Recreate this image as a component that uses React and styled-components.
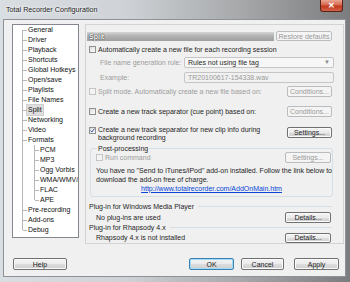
import styled, { createGlobalStyle } from "styled-components";

const GlobalStyle = createGlobalStyle`
  html, body { margin: 0; padding: 0; overflow: hidden; }
  body { font-family: "Liberation Sans", Arial, sans-serif; }
`;

const Frame = styled.div`
  width: 350px;
  height: 282px;
  box-sizing: border-box;
  display: flex;
  flex-direction: column;
  padding: 0 4px 5px 3px;
  background: linear-gradient(90deg, #d9dee3 0%, #cfd3d7 35%, #a7a9ab 68%, #7a7c7d 100%);
`;

const TitleBar = styled.div`
  height: 19px;
  display: flex;
  align-items: flex-start;
  flex-shrink: 0;
`;

const Title = styled.div`
  margin: 5px 0 0 3px;
  font-size: 7.2px;
  line-height: 9px;
  color: #1b1b1b;
  text-shadow: 0 0 4px #fff, 0 0 2px #fff;
  white-space: nowrap;
`;

const CloseBtn = styled.div`
  margin: 0 3px 0 auto;
  width: 23px;
  height: 12px;
  box-sizing: border-box;
  border: 1px solid #5b2218;
  border-top: none;
  border-radius: 0 0 3px 3px;
  background: linear-gradient(#e9a592 0%, #d5684f 45%, #c1371c 55%, #d0664a 100%);
  display: flex;
  align-items: center;
  justify-content: center;
  color: #fff;
  font-size: 8px;
  font-weight: bold;
  line-height: 1;
`;

const Client = styled.div`
  flex: 1;
  background: #f0f0f0;
  border: 1px solid #8c9298;
  padding: 4px 0 0 8px;
  display: flex;
  flex-direction: column;
  font-size: 7px;
  color: #1e1e1e;
`;

const Body = styled.div`
  display: flex;
  align-items: flex-start;
  gap: 6px;
`;

const TreeBox = styled.div`
  width: 67px;
  height: 214px;
  box-sizing: border-box;
  background: #fff;
  border: 1px solid #828790;
  overflow: hidden;
`;

const TreeList = styled.ul`
  margin: 0;
  padding: 0 0 0 ${(p) => (p.$nested ? 12 : 0)}px;
  list-style: none;
`;

const TreeItem = styled.li`
  position: relative;
  white-space: nowrap;

  &::before {
    content: "";
    position: absolute;
    left: 9px;
    top: 0;
    bottom: 0;
    border-left: 1px solid #b8b8b8;
  }
  &:first-child::before { top: ${(p) => (p.$root ? 5 : 0)}px; }
  &:last-child::before { bottom: auto; height: 5px; }
  &::after {
    content: "";
    position: absolute;
    left: 10px;
    top: 5px;
    width: 4px;
    border-top: 1px solid #b8b8b8;
  }
`;

const TreeLabel = styled.span`
  display: inline-block;
  height: 10px;
  line-height: 10px;
  margin-left: 14px;
  padding: 0 1px;
  box-sizing: border-box;
  background: ${(p) => (p.$selected ? "#dedede" : "transparent")};
  outline: ${(p) => (p.$selected ? "1px solid #cfcfcf" : "none")};
  color: #111;
`;

const Panel = styled.div`
  width: 259px;
  height: 220px;
  box-sizing: border-box;
  border: 1px solid #d3d3d3;
  padding: 6px 0 0 1px;
  display: flex;
  flex-direction: column;
`;

const Header = styled.div`
  display: flex;
  height: 10px;
  padding-right: 11px;
  gap: 2px;
`;

const HeaderBar = styled.div`
  flex: 1;
  margin-top: 1px;
  height: 9px;
  line-height: 9px;
  padding-left: 2px;
  background: linear-gradient(#d6d6d6 0%, #b2b2b2 45%, #9f9f9f 100%);
  color: #fdfdfd;
  font-weight: bold;
  text-shadow: 0 0 1px #222, 0 0 1px #222;
`;

const Row = styled.div`
  display: flex;
  align-items: ${(p) => p.$align || "center"};
  height: ${(p) => p.$h || 11}px;
  margin-top: ${(p) => p.$mt || 0}px;
  padding-left: ${(p) => (p.$pl === undefined ? 2 : p.$pl)}px;
  padding-right: ${(p) => (p.$pr === undefined ? 11 : p.$pr)}px;
  white-space: nowrap;
`;

const Text = styled.span`
  color: ${(p) => (p.$disabled ? "#9c9c9c" : "#1e1e1e")};
  line-height: ${(p) => p.$lh || 9}px;
  margin-left: ${(p) => p.$ml || 0}px;
  flex-shrink: 0;
`;

const Box = styled.span`
  width: 7px;
  height: 7px;
  box-sizing: border-box;
  flex-shrink: 0;
  margin-top: ${(p) => p.$mt || 0}px;
  border: 1px solid ${(p) => (p.$disabled ? "#c4c4c4" : "#8e8f8f")};
  background: ${(p) =>
    p.$disabled ? "#f4f4f4" : "linear-gradient(135deg, #dedede, #fbfbfb)"};
  display: flex;
  align-items: center;
  justify-content: center;
`;

const Button = styled.button`
  width: ${(p) => p.$w || 45}px;
  height: ${(p) => p.$h || 11}px;
  margin-left: ${(p) => (p.$auto ? "auto" : `${p.$ml || 0}px`)};
  margin-top: ${(p) => p.$mt || 0}px;
  padding: 0;
  box-sizing: border-box;
  flex-shrink: 0;
  font-family: inherit;
  font-size: 7px;
  line-height: 1;
  border-radius: 2px;
  border: 1px solid ${(p) => (p.$disabled ? "#b9bdc0" : p.$default ? "#3c7fb1" : "#707070")};
  color: ${(p) => (p.$disabled ? "#9a9a9a" : "#1e1e1e")};
  background: ${(p) =>
    p.$disabled
      ? "#f4f4f4"
      : "linear-gradient(#f3f3f3 0%, #ebebeb 50%, #dddddd 51%, #cfcfcf 100%)"};
  box-shadow: ${(p) =>
    p.$default ? "inset 0 0 0 1px #9fdcf7" : p.$disabled ? "none" : "inset 0 0 0 1px #fbfbfb"};
`;

const Field = styled.div`
  width: 150px;
  height: 11px;
  margin-left: auto;
  margin-right: -2px;
  box-sizing: border-box;
  border: 1px solid #c5c5c5;
  border-radius: 2px;
  background: ${(p) => (p.$combo ? "#f7f7f7" : "#f1f1f1")};
  color: ${(p) => (p.$combo ? "#2a2a2a" : "#9a9a9a")};
  display: flex;
  align-items: center;
  padding: 0 3px;
  line-height: 9px;
`;

const Arrow = styled.span`
  margin-left: auto;
  color: #8a8a8a;
  font-size: 6px;
`;

const Group = styled.fieldset`
  margin: 2px 10px 0 3px;
  padding: 0 1px 3px 5px;
  border: 1px solid #d5dfe5;
  border-radius: 3px;
  min-width: 0;
`;

const Legend = styled.legend`
  padding: 0 1px;
  margin-left: 1px;
  line-height: 9px;
  color: #1e1e1e;
`;

const Para = styled.div`
  margin-top: 3px;
  line-height: 9px;
  white-space: nowrap;
`;

const Link = styled.div`
  text-align: center;
  line-height: 9px;
  color: #0645d8;
  text-decoration: underline;
  padding-right: 4px;
`;

const Heading = styled.div`
  display: flex;
  align-items: center;
  height: 9px;
  margin-top: ${(p) => p.$mt || 0}px;
  padding: 0 11px 0 2px;
  white-space: nowrap;
`;

const Rule = styled.span`
  flex: 1;
  height: 1px;
  margin-left: 4px;
  background: #d5dfe5;
`;

const Footer = styled.div`
  display: flex;
  align-items: center;
  margin-top: 14px;
  padding: 0 6px 0 1px;
`;

const Check = ({ checked, disabled, mt }) => (
  <Box $disabled={disabled} $mt={mt}>
    {checked && (
      <svg width="5" height="5" viewBox="0 0 5 5">
        <path d="M0.6 2.6 L1.9 4 L4.4 0.6" stroke="#3a5a98" strokeWidth="1" fill="none" />
      </svg>
    )}
  </Box>
);

const tree = [
  "General", "Driver", "Playback", "Shortcuts", "Global Hotkeys", "Open/save",
  "Playlists", "File Names", "Split", "Networking", "Video",
  { label: "Formats", children: ["PCM", "MP3", "Ogg Vorbis", "WMA/WMV/ASF", "FLAC", "APE"] },
  "Pre-recording", "Add-ons", "Debug",
];

const App = () => {
  return (
    <Frame>
      <GlobalStyle />
      <TitleBar>
        <Title>Total Recorder Configuration</Title>
        <CloseBtn>✕</CloseBtn>
      </TitleBar>
      <Client>
        <Body>
          <TreeBox>
            <TreeList>
              {tree.map((item) => {
                const label = typeof item === "string" ? item : item.label;
                return (
                  <TreeItem key={label} $root>
                    <TreeLabel $selected={label === "Split"}>{label}</TreeLabel>
                    {item.children && (
                      <TreeList $nested>
                        {item.children.map((c) => (
                          <TreeItem key={c}>
                            <TreeLabel>{c}</TreeLabel>
                          </TreeItem>
                        ))}
                      </TreeList>
                    )}
                  </TreeItem>
                );
              })}
            </TreeList>
          </TreeBox>

          <Panel>
            <Header>
              <HeaderBar>Split</HeaderBar>
              <Button $w={56} $h={10} $disabled>Restore defaults</Button>
            </Header>

            <Row $h={10} $mt={4}>
              <Check />
              <Text $ml={2}>Automatically create a new file for each recording session</Text>
            </Row>
            <Row $mt={2} $pl={13}>
              <Text $disabled>File name generation rule:</Text>
              <Field $combo>
                Rules not using file tag
                <Arrow>▼</Arrow>
              </Field>
            </Row>
            <Row $mt={4} $pl={13}>
              <Text $disabled>Example:</Text>
              <Field>TR20100617-154338.wav</Field>
            </Row>
            <Row $mt={3}>
              <Check disabled />
              <Text $ml={2} $disabled>Split mode. Automatically create a new file based on:</Text>
              <Button $auto $disabled>Conditions...</Button>
            </Row>
            <Row $mt={9}>
              <Check />
              <Text $ml={2}>Create a new track separator (cue point) based on:</Text>
              <Button $auto $disabled>Conditions...</Button>
            </Row>
            <Row $h={16} $mt={9} $align="flex-start">
              <Check checked mt={1} />
              <Text $ml={2} $lh={8}>
                Create a new track separator for new clip info during
                <br />
                background recording
              </Text>
              <Button $auto $mt={1}>Settings...</Button>
            </Row>

            <Group>
              <Legend>Post-processing</Legend>
              <Row $mt={-1} $pl={0} $pr={0}>
                <Check disabled />
                <Text $ml={2} $disabled>Run command</Text>
                <Button $auto $w={46} $disabled>Settings...</Button>
              </Row>
              <Para>
                You have no "Send to iTunes/iPod" add-on installed. Follow the link below to
                <br />
                download the add-on free of charge.
              </Para>
              <Link>http://www.totalrecorder.com/AddOnMain.htm</Link>
            </Group>

            <Heading $mt={5}>
              Plug-in for Windows Media Player
              <Rule />
            </Heading>
            <Row $mt={1} $pl={9} $pr={12}>
              <Text>No plug-ins are used</Text>
              <Button $auto $w={46}>Details...</Button>
            </Row>
            <Heading $mt={1}>
              Plug-in for Rhapsody 4.x
              <Rule />
            </Heading>
            <Row $pl={9} $pr={12}>
              <Text>Rhapsody 4.x is not installed</Text>
              <Button $auto $w={46} $h={10}>Details...</Button>
            </Row>
          </Panel>
        </Body>

        <Footer>
          <Button $w={54} $h={12}>Help</Button>
          <Button $auto $w={45} $h={12} $default>OK</Button>
          <Button $ml={7} $w={43} $h={12}>Cancel</Button>
          <Button $ml={10} $w={45} $h={12}>Apply</Button>
        </Footer>
      </Client>
    </Frame>
  );
};

export default App;
